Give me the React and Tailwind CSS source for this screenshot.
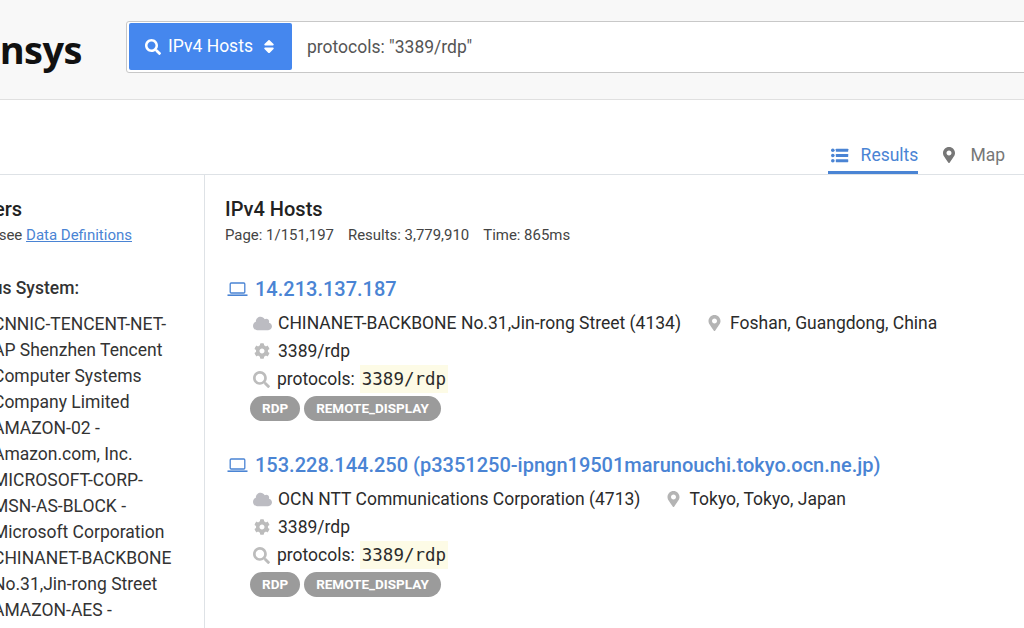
import { FaSearch, FaSort, FaMapMarkerAlt, FaCloud, FaCog } from "react-icons/fa";

const sidebarItems = [
  "CNNIC-TENCENT-NET-",
  "AP Shenzhen Tencent",
  "Computer Systems",
  "Company Limited",
  "AMAZON-02 -",
  "Amazon.com, Inc.",
  "MICROSOFT-CORP-",
  "MSN-AS-BLOCK -",
  "Microsoft Corporation",
  "CHINANET-BACKBONE",
  "No.31,Jin-rong Street",
  "AMAZON-AES -",
];

const hosts = [
  {
    title: "14.213.137.187",
    as: "CHINANET-BACKBONE No.31,Jin-rong Street (4134)",
    location: "Foshan, Guangdong, China",
  },
  {
    title: "153.228.144.250 (p3351250-ipngn19501marunouchi.tokyo.ocn.ne.jp)",
    as: "OCN NTT Communications Corporation (4713)",
    location: "Tokyo, Tokyo, Japan",
  },
];

function LaptopIcon() {
  return (
    <svg width="21" height="15" viewBox="0 0 21 15" fill="none" stroke="#4a84d4" strokeWidth="1.3">
      <rect x="3.2" y="1" width="14.6" height="10" rx="1" />
      <path d="M0.5 13.2h20" strokeWidth="1.6" />
    </svg>
  );
}

function ListIcon() {
  return (
    <svg width="18" height="15" viewBox="0 0 18 15" fill="#4a84d4">
      <circle cx="1.9" cy="2" r="1.9" />
      <circle cx="1.9" cy="7.5" r="1.9" />
      <circle cx="1.9" cy="13" r="1.9" />
      <rect x="5" y="0.5" width="13" height="3" rx="0.5" />
      <rect x="5" y="6" width="13" height="3" rx="0.5" />
      <rect x="5" y="11.5" width="13" height="3" rx="0.5" />
    </svg>
  );
}

function Host({ host }) {
  return (
    <div className="h-[176px]">
      <div className="flex items-center h-[26px]">
        <span className="ml-[2px] w-[28px] flex"><LaptopIcon /></span>
        <span className="text-[20px] font-medium text-[#4a84d4] whitespace-nowrap">{host.title}</span>
      </div>
      <div className="ml-[28px] mt-[7px] text-[17.5px] text-[#2b2b2b]">
        <div className="flex items-center h-[28px] whitespace-nowrap">
          <FaCloud className="w-[19px] h-[19px] text-[#bcbcc2] mr-[6px]" />
          <span>{host.as}</span>
          <FaMapMarkerAlt className="ml-[27px] w-[13px] h-[16px] text-[#b4b4b4] mr-[9px]" />
          <span>{host.location}</span>
        </div>
        <div className="flex items-center h-[28px]">
          <FaCog className="ml-[1px] w-[16px] h-[16px] text-[#bcbcbc] mr-[8px]" />
          <span>3389/rdp</span>
        </div>
        <div className="flex items-center h-[28px]">
          <FaSearch className="w-[17px] h-[17px] text-[#bcbcbc] mr-[7px]" />
          <span>protocols:</span>
          <span className="ml-[5px] px-[2px] h-[28px] flex items-center bg-[#fdfbe6] text-[17.5px] font-['DejaVu_Sans_Mono',monospace]">3389/rdp</span>
        </div>
      </div>
      <div className="ml-[25px] mt-[3px] flex gap-[4px]">
        <span className="h-[25px] px-[12px] rounded-full bg-[#9b9b9b] text-white text-[13.5px] font-bold flex items-center">RDP</span>
        <span className="h-[25px] px-[12px] rounded-full bg-[#9b9b9b] text-white text-[13.5px] font-bold flex items-center">REMOTE_DISPLAY</span>
      </div>
    </div>
  );
}

export default function App() {
  return (
    <div className="w-[1024px] h-[628px] overflow-hidden bg-white font-['Roboto',sans-serif] text-[#2b2b2b]">
      <header className="h-[100px] bg-[#f8f8f8] border-b border-[#e0e0e0] flex items-center">
        <div className="w-[126px] shrink-0 overflow-hidden h-[60px] flex justify-end">
          <span className="mr-[44px] text-[38px] leading-[58px] font-bold text-[#111] font-['Open_Sans',sans-serif] tracking-[-0.5px]">censys</span>
        </div>
        <div className="flex-1 h-[52px] mb-[5px] mr-[-10px] bg-white border border-[#c8c8c8] rounded-[3px] flex items-center pl-[2px]">
          <div className="w-[163px] h-[47px] mb-[2px] pt-[1px] bg-[#4587ee] rounded-[2px] text-white text-[17.5px] flex items-center justify-center">
            <FaSearch className="w-[16px] h-[16px] mr-[7px]" />
            <span>IPv4 Hosts</span>
            <FaSort className="w-[14px] h-[17px] ml-[9px]" />
          </div>
          <span className="ml-[15px] text-[17.5px] text-[#555]">protocols: "3389/rdp"</span>
        </div>
      </header>

      <nav className="h-[75px] border-b border-[#dee2e6] flex items-end justify-end">
        <div className="flex items-center gap-[12px] h-[35px] w-[90px] border-b-[3px] border-[#4a84d4] text-[#4a84d4] text-[17.5px] pl-[3px]">
          <ListIcon />
          <span>Results</span>
        </div>
        <div className="flex items-center h-[35px] pb-[3px] ml-[25px] mr-[19px] text-[#777] text-[17.5px]">
          <FaMapMarkerAlt className="w-[12px] h-[16px] mr-[15px]" />
          <span>Map</span>
        </div>
      </nav>

      <div className="flex">
        <aside className="w-[205px] h-[453px] shrink-0 border-r border-[#dee2e6] overflow-hidden pt-[22px] whitespace-nowrap">
          <div className="w-[22px] flex justify-end text-[20px] leading-[24px] font-medium text-[#222]">
            <span>Filters</span>
          </div>
          <div className="mt-[5px] w-[132px] flex justify-end text-[15px] leading-[18px] text-[#444]">
            <span>For details, see <span className="text-[#4a84d4] underline">Data Definitions</span></span>
          </div>
          <div className="mt-[31px] w-[79px] flex justify-end text-[17.5px] leading-[26px] font-medium text-[#333]">
            <span>Autonomous System:</span>
          </div>
          <ul className="mt-[10px] ml-[-7px] text-[17.5px] leading-[26px] text-[#333]">
            {sidebarItems.map((item) => <li key={item}>{item}</li>)}
          </ul>
        </aside>
        <main className="flex-1 pl-[20px] pt-[22px]">
          <h2 className="text-[20px] leading-[24px] font-medium text-[#222]">IPv4 Hosts</h2>
          <div className="mt-[5px] text-[14.95px] leading-[18px] text-[#444] flex gap-[14px]">
            <span>Page: 1/151,197</span>
            <span>Results: 3,779,910</span>
            <span>Time: 865ms</span>
          </div>
          <div className="mt-[32px]">
            {hosts.map((host) => <Host key={host.title} host={host} />)}
          </div>
        </main>
      </div>
    </div>
  );
}
